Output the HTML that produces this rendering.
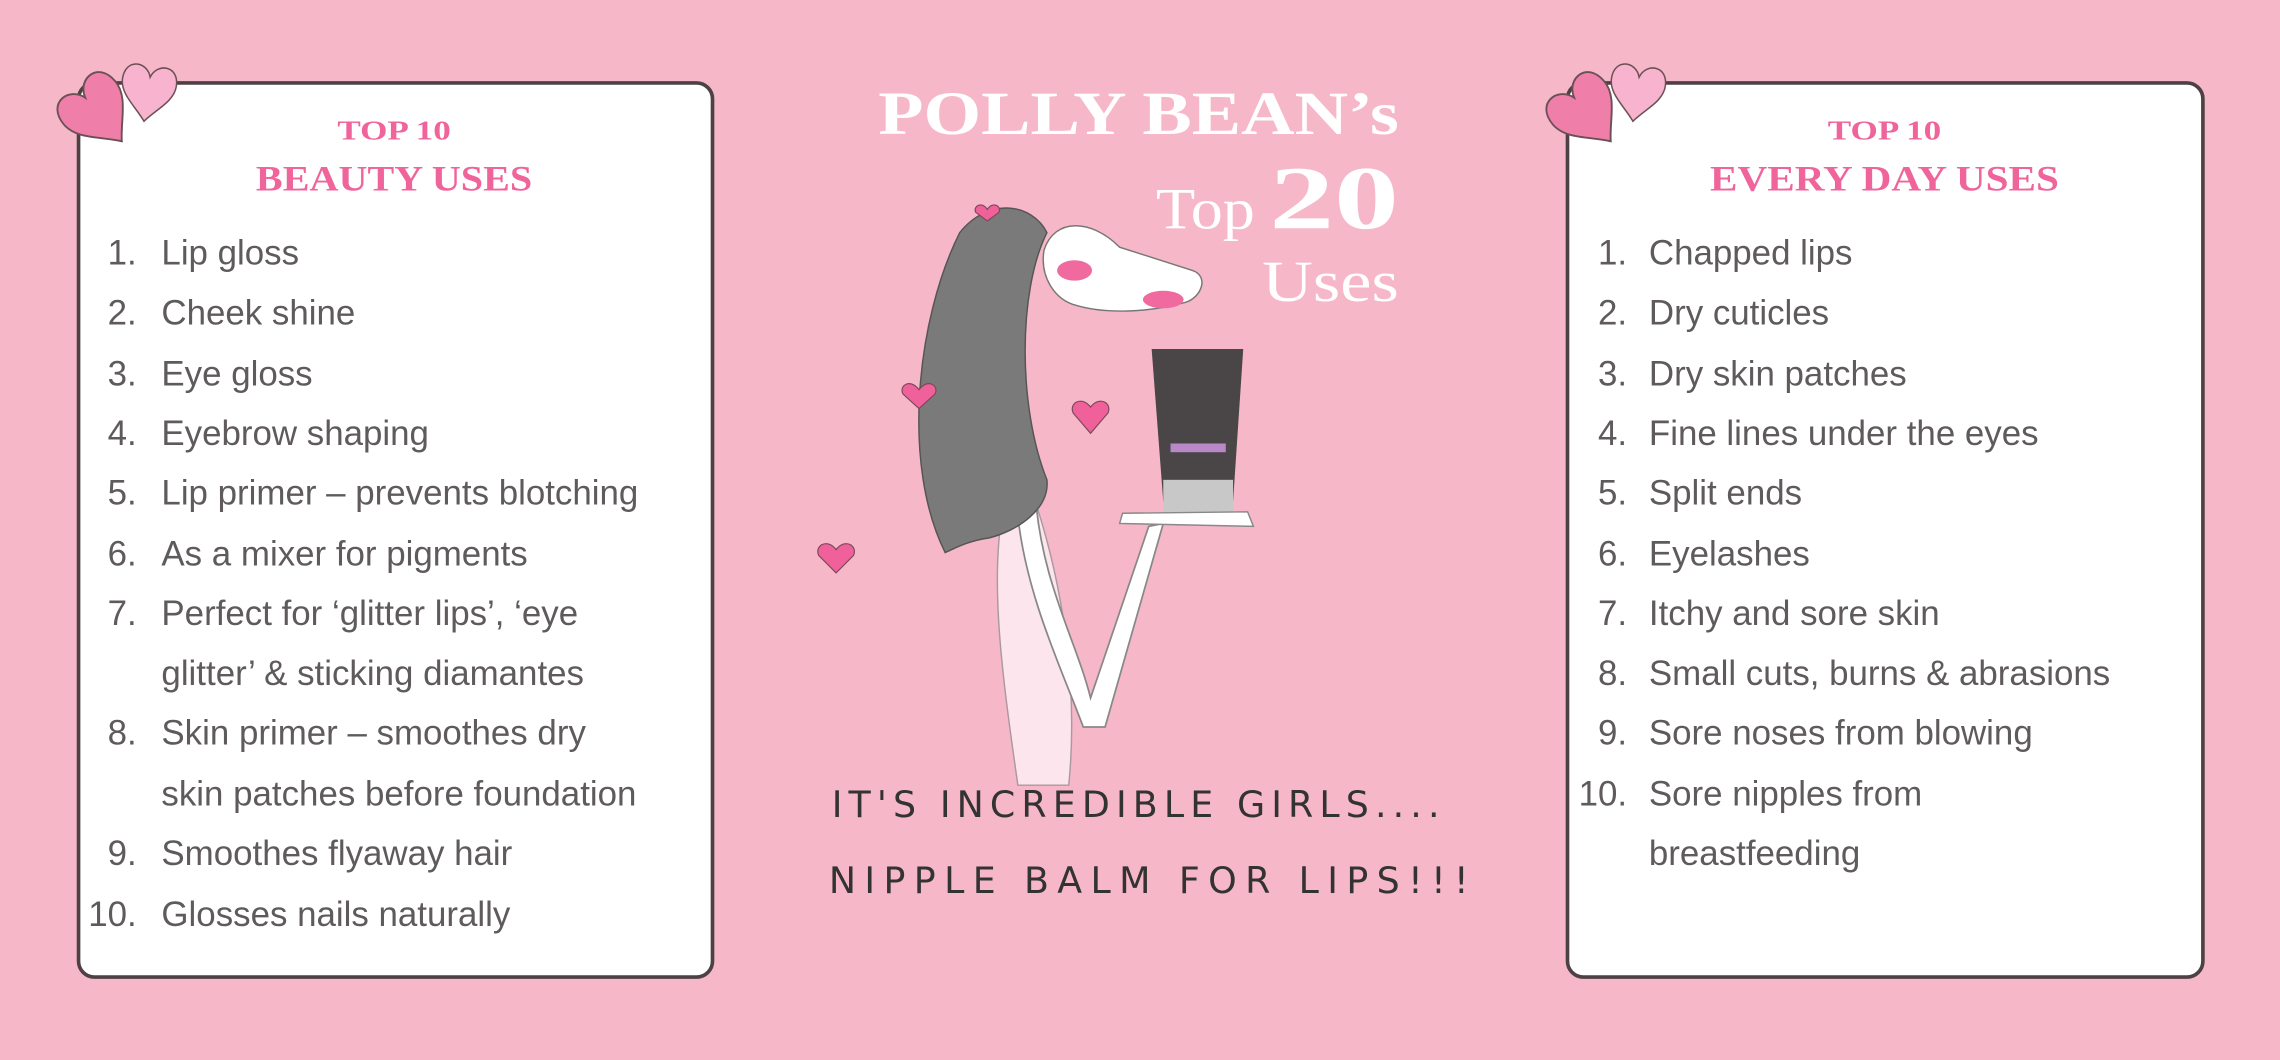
<!DOCTYPE html>
<html><head><meta charset="utf-8"><style>
html,body{margin:0;padding:0;background:#f6b8c8;}
svg{display:block}
.li{font-family:"Liberation Sans",sans-serif;font-size:24px;fill:#5f5a5c}
.n{text-anchor:end}
.h{font-family:"Liberation Serif",serif;font-weight:bold;fill:#f0649c;text-anchor:middle}
.w{font-family:"Liberation Serif",serif;fill:#fff}
.hw{font-family:"DejaVu Sans",sans-serif;font-size:25px;fill:#333;font-weight:normal}
</style></head><body>
<svg width="2280" height="1060" viewBox="0 0 1568 729" xmlns="http://www.w3.org/2000/svg">
<rect width="1568" height="729" fill="#f6b8c8"/>
<rect x="54" y="57" width="436" height="615" rx="11" fill="#fff" stroke="#4d4145" stroke-width="2.5"/>
<rect x="1078" y="57" width="437" height="615" rx="11" fill="#fff" stroke="#4d4145" stroke-width="2.5"/>
<g id="hearts">
<path d="M0 -10 C-4 -22 -22 -22 -22 -6 C-22 6 -8 14 0 24 C8 14 22 6 22 -6 C22 -22 4 -22 0 -10 Z" transform="translate(66 76) rotate(-40) scale(1.05 1.15)" fill="#ef7fa8" stroke="#6b5055" stroke-width="1.2"/>
<path d="M0 -10 C-4 -22 -22 -22 -22 -6 C-22 6 -8 14 0 24 C8 14 22 6 22 -6 C22 -22 4 -22 0 -10 Z" transform="translate(102 62) rotate(8) scale(0.85 0.9)" fill="#f8b4cf" stroke="#6b5055" stroke-width="1.2"/>
</g>
<use href="#hearts" x="1024" y="0"/>
<text class="h" x="271" y="96" font-size="19" textLength="78" lengthAdjust="spacingAndGlyphs">TOP 10</text>
<text class="h" x="271" y="131" font-size="25" textLength="190" lengthAdjust="spacingAndGlyphs">BEAUTY USES</text>
<text class="h" x="1296" y="96" font-size="19" textLength="78" lengthAdjust="spacingAndGlyphs">TOP 10</text>
<text class="h" x="1296" y="131" font-size="25" textLength="240" lengthAdjust="spacingAndGlyphs">EVERY DAY USES</text>
<g class="li">
<text class="n" x="94" y="182">1.</text><text x="111" y="182">Lip gloss</text>
<text class="n" x="94" y="223">2.</text><text x="111" y="223">Cheek shine</text>
<text class="n" x="94" y="265">3.</text><text x="111" y="265">Eye gloss</text>
<text class="n" x="94" y="306">4.</text><text x="111" y="306">Eyebrow shaping</text>
<text class="n" x="94" y="347">5.</text><text x="111" y="347">Lip primer – prevents blotching</text>
<text class="n" x="94" y="389">6.</text><text x="111" y="389">As a mixer for pigments</text>
<text class="n" x="94" y="430">7.</text><text x="111" y="430">Perfect for ‘glitter lips’, ‘eye</text>
<text x="111" y="471">glitter’ &amp; sticking diamantes</text>
<text class="n" x="94" y="512">8.</text><text x="111" y="512">Skin primer – smoothes dry</text>
<text x="111" y="554">skin patches before foundation</text>
<text class="n" x="94" y="595">9.</text><text x="111" y="595">Smoothes flyaway hair</text>
<text class="n" x="94" y="637">10.</text><text x="111" y="637">Glosses nails naturally</text>
</g>
<g class="li">
<text class="n" x="1119" y="182">1.</text><text x="1134" y="182">Chapped lips</text>
<text class="n" x="1119" y="223">2.</text><text x="1134" y="223">Dry cuticles</text>
<text class="n" x="1119" y="265">3.</text><text x="1134" y="265">Dry skin patches</text>
<text class="n" x="1119" y="306">4.</text><text x="1134" y="306">Fine lines under the eyes</text>
<text class="n" x="1119" y="347">5.</text><text x="1134" y="347">Split ends</text>
<text class="n" x="1119" y="389">6.</text><text x="1134" y="389">Eyelashes</text>
<text class="n" x="1119" y="430">7.</text><text x="1134" y="430">Itchy and sore skin</text>
<text class="n" x="1119" y="471">8.</text><text x="1134" y="471">Small cuts, burns &amp; abrasions</text>
<text class="n" x="1119" y="512">9.</text><text x="1134" y="512">Sore noses from blowing</text>
<text class="n" x="1119" y="554">10.</text><text x="1134" y="554">Sore nipples from</text>
<text x="1134" y="595">breastfeeding</text>
</g>
<text class="w" x="604" y="92" font-size="42" font-weight="bold" textLength="358" lengthAdjust="spacingAndGlyphs">POLLY BEAN’s</text>
<text class="w" x="795" y="157" font-size="40" textLength="68" lengthAdjust="spacingAndGlyphs">Top</text>
<text class="w" x="873" y="157" font-size="62" font-weight="bold" textLength="89" lengthAdjust="spacingAndGlyphs">20</text>
<text class="w" x="868" y="207" font-size="40" textLength="94" lengthAdjust="spacingAndGlyphs">Uses</text>
<!-- figure -->
<path d="M700 540 C690 470 680 400 690 350 L712 345 C730 400 742 470 735 540 Z" fill="#fde5ee" stroke="#aa99a0" stroke-width="1"/>
<path d="M712 340 C716 400 740 440 750 480 L790 362 L800 360 L760 500 L745 500 C730 460 706 410 700 355 Z" fill="#fff" stroke="#888" stroke-width="1.2"/>
<path d="M650 380 C620 320 630 220 660 160 C680 135 710 140 720 160 C700 200 700 280 720 330 C722 350 700 365 680 370 C665 372 655 378 650 380 Z" fill="#7a7a7a" stroke="#555" stroke-width="1"/>
<path d="M718 172 C725 150 750 150 770 170 L820 186 C832 190 826 205 815 208 C790 215 760 216 740 210 C725 206 715 190 718 172 Z" fill="#fff" stroke="#777" stroke-width="1"/>
<ellipse cx="739" cy="186" rx="12" ry="7" fill="#f06aa0"/>
<ellipse cx="800" cy="206" rx="14" ry="6" fill="#f06aa0"/>
<path d="M792 240 L855 240 L848 345 L800 345 Z" fill="#4a4648"/>
<rect x="800" y="330" width="48" height="22" fill="#c8c8c8"/>
<rect x="805" y="305" width="38" height="6" fill="#b888c8"/>
<path d="M772 353 L858 352 L862 362 L770 360 Z" fill="#fff" stroke="#888" stroke-width="1"/>
<g fill="#f0609a" stroke="#7a4a58" stroke-width="0.8">
<path d="M679 144 c-4 -6 -10 -2 -8 2 l8 6 l8 -6 c2 -4 -4 -8 -8 -2z"/>
<path d="M632 268 c-6 -8 -14 -3 -11 3 l11 10 l11 -10 c3 -6 -5 -11 -11 -3z"/>
<path d="M750 280 c-6 -8 -15 -3 -12 4 l12 14 l12 -14 c3 -7 -6 -12 -12 -4z"/>
<path d="M575 378 c-6 -8 -15 -3 -12 4 l12 12 l12 -12 c3 -7 -6 -12 -12 -4z"/>
</g>
<text class="hw" x="572" y="562" textLength="418" lengthAdjust="spacing">IT'S INCREDIBLE GIRLS....</text>
<text class="hw" x="570" y="614" textLength="440" lengthAdjust="spacing">NIPPLE BALM FOR LIPS!!!</text>
</svg>
</body></html>
